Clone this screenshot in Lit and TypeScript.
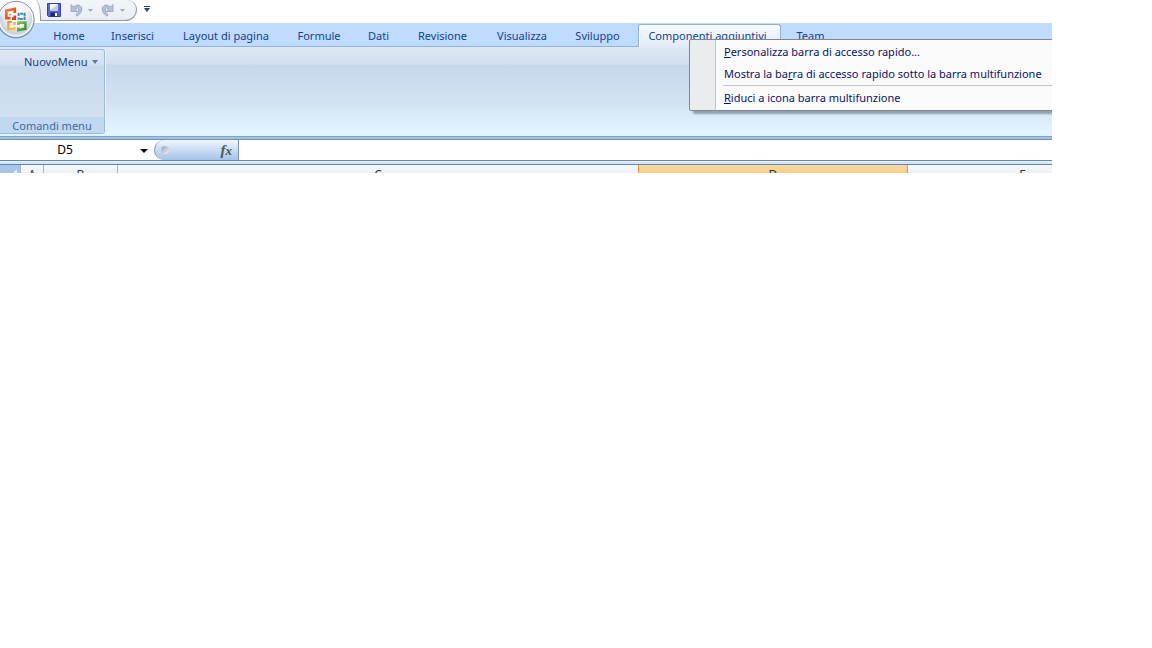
import { LitElement, html, css, svg } from "lit";
import { customElement, state } from "lit/decorators.js";
import { classMap } from "lit/directives/class-map.js";

const TABS = [
  ["Home", 58],
  ["Inserisci", 69],
  ["Layout di pagina", 118],
  ["Formule", 68],
  ["Dati", 51],
  ["Revisione", 77],
  ["Visualizza", 82],
  ["Sviluppo", 75],
  ["Componenti aggiuntivi", 143],
  ["Team", 59],
] as const;

const COLUMNS = ["A", "B", "C", "D", "E"];

const orb = svg`
  <svg viewBox="0 0 38 40" width="38" height="40" aria-hidden="true">
    <defs>
      <radialGradient id="ball" cx="0.5" cy="0.45" r="0.55">
        <stop offset="0" stop-color="#ffffff"/>
        <stop offset="0.5" stop-color="#edf0f5"/>
        <stop offset="0.8" stop-color="#c8d1de"/>
        <stop offset="1" stop-color="#e9eef5"/>
      </radialGradient>
      <linearGradient id="gloss" x1="0" y1="0" x2="0" y2="1">
        <stop offset="0" stop-color="#ffffff" stop-opacity="0.9"/>
        <stop offset="1" stop-color="#ffffff" stop-opacity="0.1"/>
      </linearGradient>
      <linearGradient id="red" gradientUnits="userSpaceOnUse" x1="5" y1="8" x2="15" y2="19">
        <stop offset="0" stop-color="#ee8a3c"/><stop offset="1" stop-color="#d23a14"/>
      </linearGradient>
      <linearGradient id="gold" gradientUnits="userSpaceOnUse" x1="7" y1="21" x2="14" y2="30">
        <stop offset="0" stop-color="#f08c1e"/><stop offset="1" stop-color="#fbc63c"/>
      </linearGradient>
      <linearGradient id="green" gradientUnits="userSpaceOnUse" x1="17" y1="21" x2="26" y2="30">
        <stop offset="0" stop-color="#a3cb3c"/><stop offset="1" stop-color="#35883a"/>
      </linearGradient>
    </defs>
    <circle cx="16" cy="20" r="18.5" fill="#8294ad"/>
    <circle cx="16" cy="19.3" r="18" fill="url(#ball)" stroke="#7585a0" stroke-width="0.8"/>
    <circle cx="16" cy="19.3" r="16.7" fill="none" stroke="#f8fafc" stroke-width="1.2"/>
    <path d="M1 17a15 14 0 0 1 30 0q-15 5-30 0z" fill="url(#gloss)"/>
    <g fill="none">
      <path d="M10.5 18.2H6.3V10.6L14.8 9V13M14.8 15.5V18.6H12" stroke="url(#red)" stroke-width="2.7"/>
      <path d="M10.2 14V15.2" stroke="#e4652a" stroke-width="1.6"/>
      <path d="M18.6 16V13.8H24.6V19H18.6V17.5" stroke="#3f86cc" stroke-width="2" stroke-dasharray="3.2 0.6"/>
      <path d="M12 22H8.3V29.2H14.4V27M14.4 25V22" stroke="url(#gold)" stroke-width="2.2"/>
      <path d="M18.3 25V22.6H25.4V28.6L18.3 30.2V27.5" stroke="url(#green)" stroke-width="2.6"/>
    </g>
  </svg>`;

const save = svg`
  <svg viewBox="0 0 14 14" width="14" height="14" aria-hidden="true">
    <path d="M0.5 0.5H13.5V13.5H1.5L0.5 12.5Z" fill="#5a66d4" stroke="#3a41a0"/>
    <rect x="3" y="1" width="8" height="6.5" fill="#f2f6fe"/>
    <path d="M3 7.5L11 1V7.5Z" fill="#bccdf2"/>
    <rect x="3.5" y="9.5" width="7" height="4" fill="#25285f"/>
    <rect x="8" y="10" width="2" height="3" fill="#fff"/>
  </svg>`;

const undo = svg`
  <svg viewBox="0 0 14 14" width="14" height="14" aria-hidden="true">
    <path d="M2 1.5V8.5H8.5L6.4 6.2Q8.8 3.8 9.8 6Q10.4 8.8 6.8 12L8 13.2Q14 9 12.6 4.4Q9.6-0.2 4.4 4Z"
      fill="#b4c1d6" stroke="#8fa1be" stroke-width="0.8"/>
  </svg>`;

const caret = svg`
  <svg viewBox="0 0 5 3" width="5" height="3" aria-hidden="true"><path d="M0 0H5L2.5 3Z" fill="currentColor"/></svg>`;

const wideCaret = svg`
  <svg viewBox="0 0 6 4" width="6" height="4" aria-hidden="true"><path d="M0 0H6L3 4Z" fill="currentColor"/></svg>`;

@customElement("app-root")
export class AppRoot extends LitElement {
  static styles = css`
    :host {
      display: block;
      min-height: 100vh;
      background: #fff;
      font: 11px/16px "Noto Sans", "Open Sans", sans-serif;
      color: #15428b;
    }
    button, input {
      font: inherit;
      color: inherit;
      margin: 0;
      padding: 0;
      border: 0;
      background: none;
      outline: none;
    }
    svg { display: block; }
    .window {
      position: relative;
      margin-right: 100px;
      overflow: hidden;
    }
    .title {
      display: flex;
      align-items: flex-start;
      height: 23px;
      padding-left: 30px;
    }
    .quick {
      display: flex;
      align-items: center;
      box-sizing: border-box;
      width: 107px;
      height: 21px;
      padding: 0 10px 0 0;
      border: 1px solid #8d99ab;
      border-top: 0;
      border-left: 0;
      border-radius: 0 10px 12px 0;
      background: linear-gradient(#f3f5f8, #e9edf3);
    }
    .quick::before {
      content: "";
      box-sizing: border-box;
      width: 11px;
      height: 21px;
      margin-right: 6px;
      border-right: 1px solid #8d99ab;
      border-top-right-radius: 6px 16px;
      background: #fff;
    }
    .quick .gap { margin-left: 8px; }
    .quick .drop { margin-left: 5px; color: #a4acb9; }
    .mirror { transform: scaleX(-1); }
    .customize {
      display: grid;
      gap: 1px;
      justify-items: center;
      margin: 6px 0 0 7px;
      color: #1f3f77;
    }
    .customize i { width: 6px; height: 1px; background: #1f3f77; }
    .orb { position: absolute; left: 0; top: 0; z-index: 2; }
    .tabs {
      display: flex;
      align-items: stretch;
      box-sizing: border-box;
      height: 24px;
      padding-left: 40px;
      background: #bfdbff;
      border-bottom: 1px solid #8db2e3;
    }
    .tab { padding-top: 2px; white-space: nowrap; }
    .tab.before { padding-right: 6px; }
    .tab.active {
      margin: 1px 0 -1px;
      padding: 0 4px 0 0;
      border: 1px solid #8db2e3;
      border-bottom: 0;
      border-radius: 3px 3px 0 0;
      background: linear-gradient(#f6faff, #e1eaf6);
      box-shadow: inset 1px 1px #fff;
    }
    .ribbon {
      box-sizing: border-box;
      height: 89px;
      padding-top: 2px;
      background: linear-gradient(#dfe9f5 0, #d3dfee 17px, #c7d8ed 18px, #d3e2f1 55px, #e3f4ff 85px, #dcf4fe 100%);
    }
    .group {
      display: flex;
      flex-direction: column;
      justify-content: space-between;
      box-sizing: border-box;
      width: 105px;
      height: 85px;
      border: 1px solid #9dbade;
      border-left: 0;
      border-radius: 0 3px 3px 0;
      box-shadow: 1px 0 #e9f2fb;
      background: linear-gradient(#dfe9f5 0, #d3e0ef 15px, #c8d9ed 16px, #d5e3f1 100%);
    }
    .newmenu {
      display: flex;
      align-items: center;
      gap: 4px;
      margin: 4px 0 0 24px;
    }
    .newmenu svg { color: #5676ad; }
    .caption {
      height: 16px;
      background: #c1d8f0;
      color: #3e6aaa;
      text-align: center;
      line-height: 17px;
    }
    .rule { height: 4px; background: linear-gradient(#84a5c9 1px, #a3c0e1 1px 3px, #6f93b8 3px); }
    .formula { display: flex; height: 20px; background: #fff; color: #000; }
    .name { display: flex; align-items: center; width: 154px; }
    .name input { width: 130px; text-align: center; font-size: 12px; line-height: 20px; }
    .name button { margin: 2px 0 0 10px; }
    .fx {
      display: flex;
      align-items: center;
      justify-content: space-between;
      box-sizing: border-box;
      width: 85px;
      padding: 0 6px;
      border: solid #7594bd;
      border-width: 0 1px;
      border-radius: 11px 0 0 11px;
      background: linear-gradient(#f2f7fe, #cddff5 45%, #a5c2ea);
    }
    .knob {
      width: 8px;
      height: 8px;
      border-radius: 50%;
      background: linear-gradient(135deg, #9ba4b4, #eef1f6);
    }
    .fx button {
      color: #50555f;
      font: italic bold 15px/18px "Liberation Serif", serif;
    }
    .fx small { font-size: 13px; }
    .cell { flex: 1; min-width: 0; padding: 0 4px; }
    .divide { height: 5px; background: linear-gradient(#6287b2 1px, #eaf2fc 1px 2px, #d5e5f8 2px 4px, #6287b2 4px); }
    .heads {
      display: grid;
      grid-template-columns: 21px 23px 74px 521px 269px 230px;
      height: 8px;
      overflow: hidden;
      color: #27343f;
      text-align: center;
      line-height: 20px;
      font-size: 12px;
    }
    .heads > * {
      box-sizing: border-box;
      height: 20px;
      border-right: 1px solid #9eb6ce;
      background: linear-gradient(#f6f9fc, #dfe5ee);
    }
    .heads .corner {
      display: flex;
      justify-content: flex-end;
      padding: 4px 3px 0 0;
      background: #a9c4e9;
    }
    .heads .beforesel { border-right-color: #f29536; }
    .heads .selected { background: linear-gradient(#f9d79b, #f2c478); border-right-color: #e8963f; }
    .menu {
      position: absolute;
      left: 689px;
      right: -4px;
      top: 39px;
      z-index: 3;
      box-sizing: border-box;
      padding: 1px 0;
      border: 1px solid #868686;
      border-radius: 2px;
      background: linear-gradient(90deg, #e9eded 25px, #c5c5c5 25px 26px, #fafafa 26px);
      box-shadow: 4px 3px 2px rgba(70, 90, 110, 0.5);
      color: #0a1464;
    }
    .menu button {
      display: block;
      width: 100%;
      height: 22px;
      padding-left: 34px;
      text-align: left;
      white-space: nowrap;
    }
    .menu hr { margin: 0 0 1px 33px; border: 0; height: 1px; background: #c5c5c5; }
  `;

  @state() private active = "Componenti aggiuntivi";

  render() {
    return html`
      <div class="window">
        <header class="title">
          <button class="orb" aria-label="Pulsante Office">${orb}</button>
          <div class="quick">
            <button aria-label="Salva">${save}</button>
            <button class="gap" aria-label="Annulla">${undo}</button>
            <button class="drop" aria-label="Elenco annulla">${caret}</button>
            <button class="gap mirror" aria-label="Ripristina">${undo}</button>
            <button class="drop" aria-label="Elenco ripristina">${caret}</button>
          </div>
          <button class="customize" aria-label="Personalizza"><i></i>${wideCaret}</button>
        </header>
        <nav class="tabs" role="tablist">
          ${TABS.map(
            ([name, width], i) => html`<button
              role="tab"
              aria-selected=${name === this.active}
              class=${classMap({
                tab: true,
                active: name === this.active,
                before: TABS[i + 1]?.[0] === this.active,
              })}
              style="width:${width}px"
              @click=${() => (this.active = name)}
            >${name}</button>`
          )}
        </nav>
        <section class="ribbon">
          <div class="group">
            <button class="newmenu">NuovoMenu ${wideCaret}</button>
            <div class="caption">Comandi menu</div>
          </div>
        </section>
        <div class="rule"></div>
        <div class="formula">
          <div class="name">
            <input aria-label="Casella nome" value="D5" />
            <button aria-label="Apri elenco nomi">
              <svg viewBox="0 0 8 4" width="8" height="4"><path d="M0 0H8L4 4Z" /></svg>
            </button>
          </div>
          <div class="fx">
            <span class="knob"></span>
            <button aria-label="Inserisci funzione">f<small>x</small></button>
          </div>
          <input class="cell" aria-label="Barra della formula" />
        </div>
        <div class="divide"></div>
        <div class="heads">
          <span class="corner">
            <svg viewBox="0 0 10 10" width="10" height="10"><path d="M10 0V10H0Z" fill="#e6effb" /></svg>
          </span>
          ${COLUMNS.map(
            (c) => html`<span class=${classMap({ selected: c === "D", beforesel: c === "C" })}>${c}</span>`
          )}
        </div>
        <div class="menu" role="menu">
          <button role="menuitem"><u>P</u>ersonalizza barra di accesso rapido...</button>
          <button role="menuitem">Mostra la ba<u>r</u>ra di accesso rapido sotto la barra multifunzione</button>
          <hr />
          <button role="menuitem"><u>R</u>iduci a icona barra multifunzione</button>
        </div>
      </div>
    `;
  }
}
